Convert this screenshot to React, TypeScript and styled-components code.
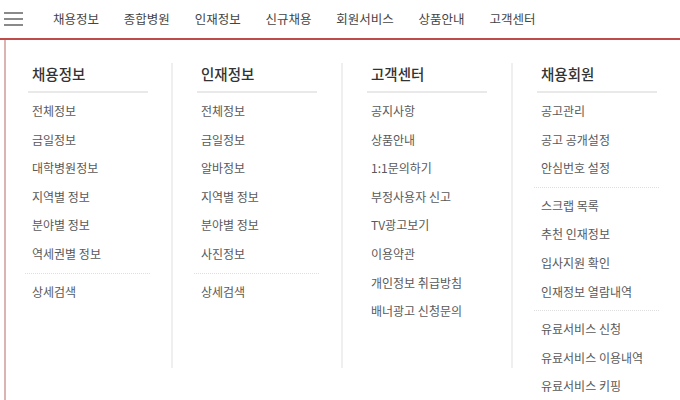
import React from "react";
import styled, { createGlobalStyle } from "styled-components";

const GlobalStyle = createGlobalStyle`
  html, body {
    margin: 0;
    padding: 0;
    background: #fff;
  }
  body {
    font-family: "Noto Sans CJK KR", "Noto Sans", sans-serif;
    width: 680px;
    height: 400px;
    overflow: hidden;
  }
`;

interface MenuGroup {
  title: string;
  sections: string[][];
}

const navItems = ["채용정보", "종합병원", "인재정보", "신규채용", "회원서비스", "상품안내", "고객센터"];

const groups: MenuGroup[] = [
  {
    title: "채용정보",
    sections: [
      ["전체정보", "금일정보", "대학병원정보", "지역별 정보", "분야별 정보", "역세권별 정보"],
      ["상세검색"],
    ],
  },
  {
    title: "인재정보",
    sections: [
      ["전체정보", "금일정보", "알바정보", "지역별 정보", "분야별 정보", "사진정보"],
      ["상세검색"],
    ],
  },
  {
    title: "고객센터",
    sections: [
      ["공지사항", "상품안내", "1:1문의하기", "부정사용자 신고", "TV광고보기", "이용약관", "개인정보 취급방침", "배너광고 신청문의"],
    ],
  },
  {
    title: "채용회원",
    sections: [
      ["공고관리", "공고 공개설정", "안심번호 설정"],
      ["스크랩 목록", "추천 인재정보", "입사지원 확인", "인재정보 열람내역"],
      ["유료서비스 신청", "유료서비스 이용내역", "유료서비스 키핑"],
    ],
  },
];

const Header = styled.header`
  display: flex;
  align-items: center;
  height: 38px;
  border-bottom: 2px solid #bf4b4b;
  box-sizing: content-box;
`;

const MenuButton = styled.button`
  display: flex;
  flex-direction: column;
  justify-content: space-between;
  width: 19px;
  height: 14px;
  margin: 0 0 0 4px;
  padding: 0;
  border: none;
  background: none;
  cursor: pointer;

  span {
    display: block;
    height: 2px;
    background: #8a8a8a;
  }
`;

const Nav = styled.nav`
  display: flex;
  gap: 24.8px;
  margin-left: 30px;
`;

const NavLink = styled.a`
  font-size: 12.5px;
  color: #444;
  text-decoration: none;
  white-space: nowrap;
  line-height: 20px;
`;

const Panel = styled.div`
  display: grid;
  grid-template-columns: 165px 170px 170px 1fr;
  align-items: start;
  margin-left: 4px;
  padding-top: 23px;
  border-left: 2px solid #dcb3b3;
  height: 360px;
  box-sizing: border-box;
`;

const Column = styled.div<{ $first?: boolean }>`
  height: 305px;
  padding-left: ${(p) => (p.$first ? "22px" : "24px")};
  border-left: ${(p) => (p.$first ? "none" : "2px solid #efefef")};
`;

const Title = styled.h3`
  width: 120px;
  margin: 0;
  padding: 0 4px 6px;
  box-sizing: border-box;
  font-size: 14.5px;
  font-weight: 500;
  line-height: 22px;
  color: #333;
  border-bottom: 2px solid #e9e9e9;
`;

const List = styled.ul`
  list-style: none;
  margin: 0;
  padding: 4px 0 0;
  width: 122px;
`;

const Item = styled.li`
  height: 28.6px;
  padding-left: 4px;
  font-size: 12px;
  line-height: 28.6px;
  color: #595959;
  white-space: nowrap;
`;

const Divider = styled.li`
  margin: 4px 0 4px -3px;
  border-top: 1px dotted #dedede;
`;

export default function App() {
  return (
    <>
      <GlobalStyle />
      <Header>
        <MenuButton aria-label="menu">
          <span />
          <span />
          <span />
        </MenuButton>
        <Nav>
          {navItems.map((n) => (
            <NavLink key={n} href="#">
              {n}
            </NavLink>
          ))}
        </Nav>
      </Header>
      <Panel>
        {groups.map((g, gi) => (
          <Column key={g.title} $first={gi === 0}>
            <Title>{g.title}</Title>
            <List>
              {g.sections.map((sec, si) => (
                <React.Fragment key={si}>
                  {si > 0 && <Divider />}
                  {sec.map((it) => (
                    <Item key={it}>{it}</Item>
                  ))}
                </React.Fragment>
              ))}
            </List>
          </Column>
        ))}
      </Panel>
    </>
  );
}
